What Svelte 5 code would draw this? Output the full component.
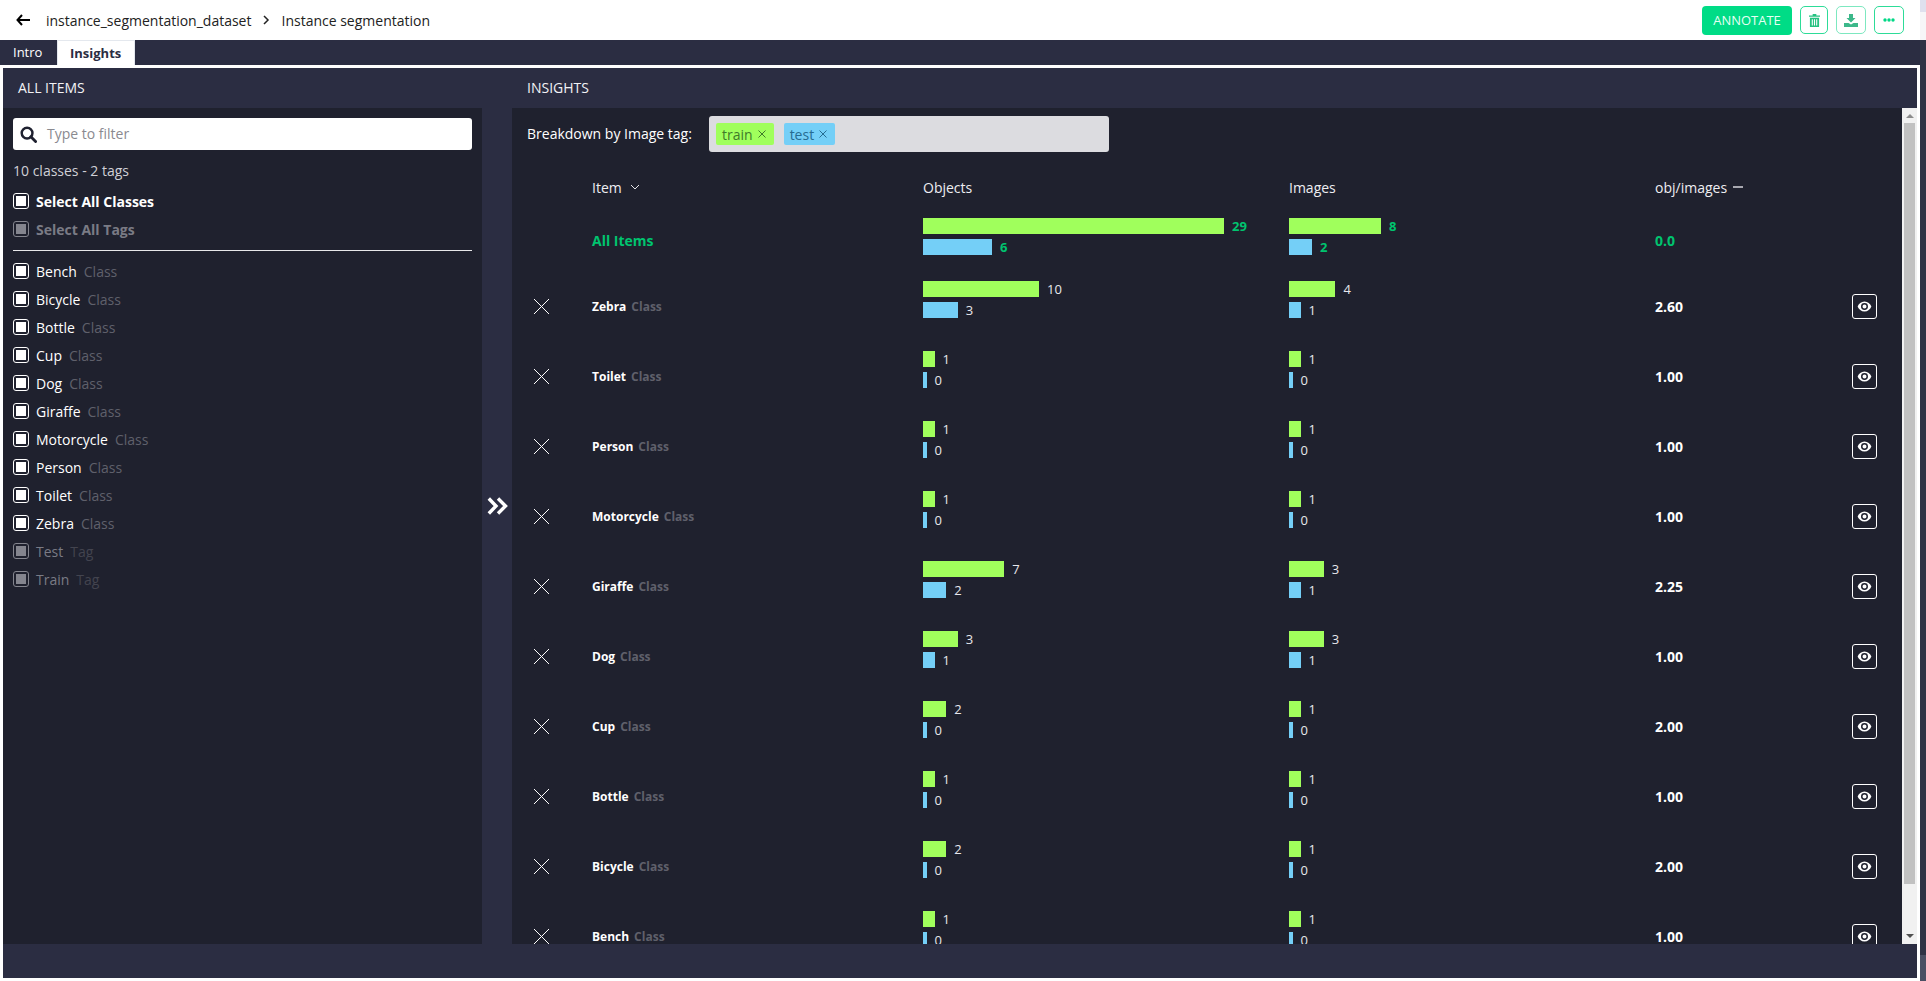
<script>
	const classes = ["Bench", "Bicycle", "Bottle", "Cup", "Dog", "Giraffe", "Motorcycle", "Person", "Toilet", "Zebra"]
	const tags = ["Test", "Train"]

	const rows = [
		{ name: "Zebra", obj: [10, 3], img: [4, 1], ratio: "2.60" },
		{ name: "Toilet", obj: [1, 0], img: [1, 0], ratio: "1.00" },
		{ name: "Person", obj: [1, 0], img: [1, 0], ratio: "1.00" },
		{ name: "Motorcycle", obj: [1, 0], img: [1, 0], ratio: "1.00" },
		{ name: "Giraffe", obj: [7, 2], img: [3, 1], ratio: "2.25" },
		{ name: "Dog", obj: [3, 1], img: [3, 1], ratio: "1.00" },
		{ name: "Cup", obj: [2, 0], img: [1, 0], ratio: "2.00" },
		{ name: "Bottle", obj: [1, 0], img: [1, 0], ratio: "1.00" },
		{ name: "Bicycle", obj: [2, 0], img: [1, 0], ratio: "2.00" },
		{ name: "Bench", obj: [1, 0], img: [1, 0], ratio: "1.00" },
	]

	const barWidth = n => (n === 0 ? 3.5 : n * 11.6)
</script>

<div class="page">
	<div class="main">
		<header class="topbar">
			<svg class="back" viewBox="0 0 14 12" width="14" height="12"><path d="M6 1 1.5 6 6 11M1.5 6H14" fill="none" stroke="#000" stroke-width="2"/></svg>
			<span class="crumb">instance_segmentation_dataset</span>
			<svg class="chev" viewBox="0 0 7 10" width="7" height="10"><path d="M1 1l4 4-4 4" fill="none" stroke="#222" stroke-width="1.5"/></svg>
			<span class="crumb">Instance segmentation</span>
			<div class="actions">
				<button class="annotate">ANNOTATE</button>
				<button class="act w28">
					<svg viewBox="0 0 12 14" width="11" height="13"><path d="M4 0h4v1.5h4V3H0V1.5h4zM1 4h10v10H1zM3 5.5v7h1.2v-7zM5.4 5.5v7h1.2v-7zM7.8 5.5v7H9v-7z" fill="#26c281" fill-rule="evenodd"/></svg>
				</button>
				<button class="act w30 soft">
					<svg viewBox="0 0 14 13" width="14" height="13"><path d="M5 0h4v4h2.5L7 8.5 2.500 4H5zM0 9h4.500L7 10.500 9.500 9H14v4H0z" fill="#3cb88a"/></svg>
				</button>
				<button class="act w30">
					<svg viewBox="0 0 12 4" width="12" height="4"><circle cx="2" cy="2" r="1.700" fill="#00d886"/><circle cx="6" cy="2" r="1.700" fill="#00d886"/><circle cx="10" cy="2" r="1.700" fill="#00d886"/></svg>
				</button>
			</div>
		</header>

		<nav class="tabs">
			<span class="tab">Intro</span>
			<span class="tab active">Insights</span>
		</nav>

		<div class="panel">
			<div class="panel-heads">
				<div class="head left-head">ALL ITEMS</div>
				<div class="head">INSIGHTS</div>
			</div>
			<div class="panel-body">
				<aside class="sidebar">
					<div class="search">
						<svg viewBox="0 0 18 18" width="17" height="17"><circle cx="7.500" cy="7.500" r="5.700" fill="none" stroke="#1f2130" stroke-width="2.600"/><path d="M11.500 11.500 16.500 16.500" stroke="#1f2130" stroke-width="3" stroke-linecap="round"/></svg>
						<span class="placeholder">Type to filter</span>
					</div>
					<div class="count">10 classes - 2 tags</div>
					<div class="check-row strong"><span class="box"></span>Select All Classes</div>
					<div class="check-row strong dim"><span class="box"></span>Select All Tags</div>
					<hr />
					{#each classes as c}
						<div class="check-row"><span class="box"></span>{c}<em>Class</em></div>
					{/each}
					{#each tags as t}
						<div class="check-row dim"><span class="box"></span>{t}<em>Tag</em></div>
					{/each}
				</aside>

				<div class="collapse">
					<svg viewBox="0 0 21 18" width="21" height="18"><path d="M1.800 1.500 9 9l-7.200 7.500M11 1.500 18.500 9 11 16.500" fill="none" stroke="#fff" stroke-width="3.400"/></svg>
				</div>

				<section class="insights">
					<div class="scroll">
						<div class="filter">
							<span class="filter-label">Breakdown by Image tag:</span>
							<div class="tagbox">
								<span class="chip train">train<svg viewBox="0 0 8 8" width="8" height="8"><path d="M.5.500l7 7M7.500.500l-7 7" stroke="currentColor" stroke-width="1" fill="none"/></svg></span>
								<span class="chip test">test<svg viewBox="0 0 8 8" width="8" height="8"><path d="M.5.500l7 7M7.500.500l-7 7" stroke="currentColor" stroke-width="1" fill="none"/></svg></span>
							</div>
						</div>

						<div class="grid thead">
							<span></span>
							<span class="th">Item <svg viewBox="0 0 10 6" width="10" height="6"><path d="M1 1l4 4 4-4" fill="none" stroke="#e4e4e8" stroke-width="1"/></svg></span>
							<span class="th">Objects</span>
							<span class="th">Images</span>
							<span class="th">obj/images <b class="dash"></b></span>
							<span></span>
						</div>

						<div class="grid row total">
							<span></span>
							<span class="all">All Items</span>
							<div class="bars">
								<div class="bar-line"><span class="bar green" style="width:301px"></span><span class="num">29</span></div>
								<div class="bar-line"><span class="bar blue" style="width:69px"></span><span class="num">6</span></div>
							</div>
							<div class="bars">
								<div class="bar-line"><span class="bar green" style="width:92px"></span><span class="num">8</span></div>
								<div class="bar-line"><span class="bar blue" style="width:23px"></span><span class="num">2</span></div>
							</div>
							<span class="ratio">0.0</span>
							<span></span>
						</div>

						{#each rows as r}
							<div class="grid row">
								<svg class="cross" viewBox="0 0 15 15" width="15" height="15"><path d="M0 0 15 15M15 0 0 15" stroke="#fff" stroke-width="1" fill="none"/></svg>
								<span class="name">{r.name}<em>Class</em></span>
								<div class="bars">
									<div class="bar-line"><span class="bar green" style="width:{barWidth(r.obj[0])}px"></span><span class="num">{r.obj[0]}</span></div>
									<div class="bar-line"><span class="bar blue" style="width:{barWidth(r.obj[1])}px"></span><span class="num">{r.obj[1]}</span></div>
								</div>
								<div class="bars">
									<div class="bar-line"><span class="bar green" style="width:{barWidth(r.img[0])}px"></span><span class="num">{r.img[0]}</span></div>
									<div class="bar-line"><span class="bar blue" style="width:{barWidth(r.img[1])}px"></span><span class="num">{r.img[1]}</span></div>
								</div>
								<span class="ratio">{r.ratio}</span>
								<button class="eye">
									<svg viewBox="0 0 16 12" width="15" height="11"><path d="M8 .5C4.500.5 1.700 3 .5 6c1.200 3 4 5.500 7.500 5.500S14.300 9 15.500 6C14.300 3 11.500.5 8 .5zm0 9.300A3.800 3.800 0 1 1 8 2.200a3.800 3.800 0 0 1 0 7.600zM8 3.800a2.200 2.200 0 1 0 0 4.400 2.200 2.200 0 0 0 0-4.400z" fill="#fff" fill-rule="evenodd"/></svg>
								</button>
							</div>
						{/each}
					</div>
					<div class="scrollbar">
						<span class="arrow up"></span>
						<span class="thumb"></span>
						<span class="arrow down"></span>
					</div>
				</section>
			</div>
			<div class="panel-foot"></div>
		</div>
	</div>
	<div class="page-scroll"><span class="ps-top"></span><span class="ps-light"></span><span class="ps-dark"></span><span class="ps-end"></span></div>
</div>

<style>
	:global(body) {
		margin: 0;
		background: #fff;
		overflow: hidden;
		font-family: "Open Sans", "Liberation Sans", sans-serif;
	}

	.page {
		display: flex;
		height: 981px;
	}

	.main {
		flex: 1;
		min-width: 0;
		display: flex;
		flex-direction: column;
	}

	.page-scroll {
		width: 6px;
		display: flex;
		flex-direction: column;
	}

	.ps-top {
		height: 12px;
		background: #dfe0ee;
	}

	.ps-light {
		height: 28px;
		background: #f6f6f8;
	}

	.ps-dark {
		flex: 1;
		background: #2f3345;
	}

	.ps-end {
		height: 26px;
		background: #4a4f63;
	}

	.topbar {
		height: 40px;
		display: flex;
		align-items: center;
		padding: 0 16px 0 16px;
		font-size: 14px;
		color: #222;
	}

	.back {
		margin-right: 16px;
	}

	.chev {
		margin: 0 11px 0 12px;
	}

	.actions {
		margin-left: auto;
		display: flex;
		align-items: center;
		gap: 8px;
	}

	button {
		font-family: inherit;
		padding: 0;
		cursor: pointer;
	}

	.annotate {
		width: 90px;
		height: 29px;
		background: #00dc86;
		border: 0;
		border-radius: 4px;
		color: #e6fff4;
		font-size: 13px;
	}

	.act {
		height: 28px;
		background: #fff;
		border: 1px solid #2ddc98;
		border-radius: 5px;
		display: flex;
		align-items: center;
		justify-content: center;
	}

	.soft {
		border-color: #7de8c0;
	}

	.w28 {
		width: 28px;
	}

	.w30 {
		width: 30px;
	}

	.tabs {
		height: 25px;
		background: #2b2d42;
		display: flex;
		font-size: 13px;
		line-height: 25px;
		color: #fff;
	}

	.tab {
		padding: 0 13px;
		width: 57px;
		box-sizing: border-box;
	}

	.tab.active {
		width: 78px;
		background: #fff;
		color: #2b2d42;
		font-weight: 700;
		padding: 0 12px;
		border: solid #e4e8ee;
		border-width: 1px 1px 0;
		line-height: 24px;
	}

	.panel {
		margin: 3px 3px 3px 3px;
		flex: 1;
		min-height: 0;
		display: flex;
		flex-direction: column;
		background: #2b2d42;
		color: #fff;
	}

	.panel-heads {
		height: 40px;
		display: flex;
		align-items: center;
		font-size: 14px;
		color: #f2f2f5;
		padding-bottom: 1px;
		box-sizing: border-box;
	}

	.head {
		padding-left: 15px;
	}

	.left-head {
		width: 509px;
		box-sizing: border-box;
	}

	.panel-body {
		flex: 1;
		min-height: 0;
		display: flex;
	}

	.panel-foot {
		height: 34px;
		flex: none;
	}

	.sidebar {
		width: 479px;
		flex: none;
		box-sizing: border-box;
		background: #1f212e;
		padding: 10px 10px 0;
		font-size: 14px;
	}

	.search {
		height: 32px;
		background: #fff;
		border-radius: 3px;
		display: flex;
		align-items: center;
		padding-left: 7px;
		gap: 10px;
		color: #8a8a90;
	}

	.placeholder {
		margin-top: -1px;
	}

	.count {
		margin-top: 10px;
		height: 22px;
		line-height: 22px;
		color: #d0d0d6;
		font-size: 14px;
	}

	.check-row {
		height: 28px;
		display: flex;
		align-items: center;
		color: #fff;
		font-size: 14px;
		white-space: nowrap;
	}

	.count + .check-row {
		margin-top: 5px;
	}

	.check-row em {
		font-style: normal;
		color: #5f606b;
		margin-left: 7px;
	}

	.strong {
		font-weight: 700;
	}

	.dim {
		color: #7a7b85;
	}

	.dim em {
		color: #43444f;
	}

	.box {
		width: 16px;
		height: 16px;
		box-sizing: border-box;
		margin-right: 7px;
		border: 1px solid #fff;
		border-radius: 3px;
		padding: 2px;
		background-clip: content-box;
		background-color: #fff;
		flex: none;
	}

	.dim .box {
		border-color: #84858e;
		background-color: #84858e;
	}

	hr {
		border: 0;
		height: 1px;
		background: #e8e8ea;
		margin: 7px 0 6px;
	}

	.collapse {
		width: 30px;
		flex: none;
		display: flex;
		align-items: center;
		justify-content: center;
		padding-bottom: 40px;
		box-sizing: border-box;
	}

	.insights {
		flex: 1;
		min-width: 0;
		display: flex;
		background: #1f212e;
	}

	.scroll {
		flex: 1;
		min-width: 0;
		overflow: hidden;
	}

	.filter {
		display: flex;
		align-items: center;
		height: 36px;
		margin: 8px 0 0 15px;
		gap: 16px;
		font-size: 14px;
	}

	.filter-label {
		width: 166px;
		white-space: nowrap;
		margin-top: -2px;
	}

	.tagbox {
		width: 400px;
		height: 36px;
		box-sizing: border-box;
		background: #dcdce0;
		border-radius: 3px;
		display: flex;
		align-items: center;
		padding-left: 7px;
		gap: 10px;
	}

	.chip {
		height: 22px;
		border-radius: 2px;
		display: flex;
		align-items: center;
		gap: 5px;
		padding: 0 8px 0 6px;
		font-size: 14px;
		color: #3f7a2a;
	}

	.train {
		background: #a0ff5c;
	}

	.test {
		background: #74cff7;
		color: #266c92;
	}

	.grid {
		display: grid;
		grid-template-columns: 80px 331px 366px 366px 197px 25px;
		align-items: center;
	}

	.thead {
		height: 42px;
		margin: 14px 0 1px;
		font-size: 14px;
		color: #eeeef2;
	}

	.th {
		display: flex;
		align-items: center;
		gap: 8px;
	}

	.dash {
		width: 10px;
		height: 2px;
		background: #a8a8b0;
		margin-left: -2px;
	}

	.row {
		height: 70px;
	}

	.total {
		height: 62px;
	}

	.cross {
		justify-self: start;
		margin-left: 22px;
	}

	.all {
		font-size: 14px;
		font-weight: 700;
		color: #00c46f;
	}

	.name {
		font-size: 12px;
		font-weight: 700;
	}

	.name em {
		font-style: normal;
		color: #5f606b;
		margin-left: 5px;
	}

	.bars {
		display: flex;
		flex-direction: column;
		gap: 5px;
		margin-bottom: 13px;
	}

	.total .bars {
		margin-bottom: 7px;
	}

	.bar-line {
		display: flex;
		align-items: center;
		height: 16px;
		gap: 8px;
	}

	.bar {
		height: 16px;
		flex: none;
	}

	.green {
		background: #a0ff5c;
	}

	.blue {
		background: #74cff7;
	}

	.num {
		font-size: 13px;
		color: #e8e8ec;
	}

	.total .num {
		color: #00c46f;
		font-weight: 700;
	}

	.ratio {
		font-size: 14px;
		font-weight: 700;
	}

	.total .ratio {
		color: #00c46f;
	}

	.eye {
		width: 25px;
		height: 25px;
		background: none;
		border: 1px solid #fff;
		border-radius: 3px;
		display: flex;
		align-items: center;
		justify-content: center;
	}

	.scrollbar {
		width: 15px;
		flex: none;
		background: #f1f1f1;
		display: flex;
		flex-direction: column;
		align-items: center;
		padding: 6px 0;
		box-sizing: border-box;
	}

	.thumb {
		width: 11px;
		flex: 1;
		background: #c1c1c1;
		margin: 5px 0 50px;
	}

	.arrow {
		width: 0;
		height: 0;
		border-left: 4px solid transparent;
		border-right: 4px solid transparent;
	}

	.up {
		border-bottom: 4px solid #8c8c8c;
	}

	.down {
		border-top: 4px solid #505050;
	}
</style>
